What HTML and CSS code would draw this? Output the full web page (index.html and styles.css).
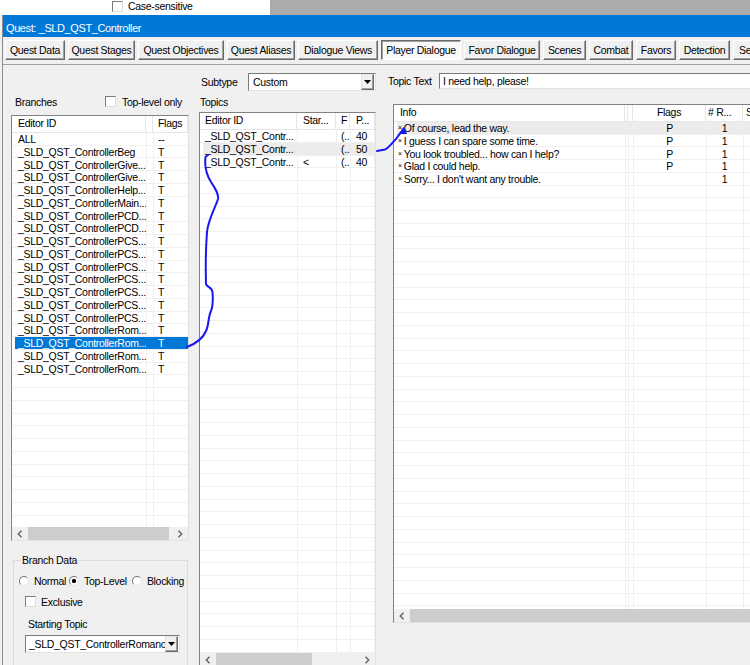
FILE: index.html
```html
<!DOCTYPE html>
<html lang="en">

<head>
    <meta charset="UTF-8">
    <title>Quest: _SLD_QST_Controller</title>
    <link rel="stylesheet" href="styles.css">
</head>

<body>
    <!-- window behind -->
    <div class="behind">
        <span class="cb"></span><span class="behind_text">Case-sensitive</span>
    </div>

    <div class="window">
        <div class="titlebar">Quest: _SLD_QST_Controller</div>

        <div class="tabs">
            <div class="tab">Quest Data</div>
            <div class="tab">Quest Stages</div>
            <div class="tab">Quest Objectives</div>
            <div class="tab">Quest Aliases</div>
            <div class="tab">Dialogue Views</div>
            <div class="tab on">Player Dialogue</div>
            <div class="tab">Favor Dialogue</div>
            <div class="tab">Scenes</div>
            <div class="tab">Combat</div>
            <div class="tab">Favors</div>
            <div class="tab">Detection</div>
            <div class="tab">Se</div>
        </div>

        <div class="panel">
            <!-- branches -->
            <div class="branches">
                <div class="branches_head">
                    <span class="branches_label">Branches</span>
                    <span class="cb"></span>
                    <span>Top-level only</span>
                </div>
                <div class="list branch_list">
                    <div class="lv_head"><span>Editor ID</span><span></span><span>Flags</span></div>
                    <div class="lv_body">
                        <div class="lv_row"><span>ALL</span><span></span><span>--</span></div>
                        <div class="lv_row"><span>_SLD_QST_ControllerBeg</span><span></span><span>T</span></div>
                        <div class="lv_row"><span>_SLD_QST_ControllerGive...</span><span></span><span>T</span></div>
                        <div class="lv_row"><span>_SLD_QST_ControllerGive...</span><span></span><span>T</span></div>
                        <div class="lv_row"><span>_SLD_QST_ControllerHelp...</span><span></span><span>T</span></div>
                        <div class="lv_row"><span>_SLD_QST_ControllerMain...</span><span></span><span>T</span></div>
                        <div class="lv_row"><span>_SLD_QST_ControllerPCD...</span><span></span><span>T</span></div>
                        <div class="lv_row"><span>_SLD_QST_ControllerPCD...</span><span></span><span>T</span></div>
                        <div class="lv_row"><span>_SLD_QST_ControllerPCS...</span><span></span><span>T</span></div>
                        <div class="lv_row"><span>_SLD_QST_ControllerPCS...</span><span></span><span>T</span></div>
                        <div class="lv_row"><span>_SLD_QST_ControllerPCS...</span><span></span><span>T</span></div>
                        <div class="lv_row"><span>_SLD_QST_ControllerPCS...</span><span></span><span>T</span></div>
                        <div class="lv_row"><span>_SLD_QST_ControllerPCS...</span><span></span><span>T</span></div>
                        <div class="lv_row"><span>_SLD_QST_ControllerPCS...</span><span></span><span>T</span></div>
                        <div class="lv_row"><span>_SLD_QST_ControllerPCS...</span><span></span><span>T</span></div>
                        <div class="lv_row"><span>_SLD_QST_ControllerRom...</span><span></span><span>T</span></div>
                        <div class="lv_row sel"><span>_SLD_QST_ControllerRom...</span><span></span><span>T</span></div>
                        <div class="lv_row"><span>_SLD_QST_ControllerRom...</span><span></span><span>T</span></div>
                        <div class="lv_row"><span>_SLD_QST_ControllerRom...</span><span></span><span>T</span></div>
                    </div>
                    <div class="hscroll">
                        <span class="sb_btn"><svg width="6" height="8" viewBox="0 0 6 8"><path d="M4.5 0.8 L1.3 4 L4.5 7.2" fill="none" stroke="#606060" stroke-width="1.4"/></svg></span>
                        <span class="sb_thumb"></span>
                        <span class="sb_track"></span>
                        <span class="sb_btn"><svg width="6" height="8" viewBox="0 0 6 8"><path d="M1.5 0.8 L4.7 4 L1.5 7.2" fill="none" stroke="#606060" stroke-width="1.4"/></svg></span>
                    </div>
                </div>

                <fieldset class="group">
                    <legend>Branch Data</legend>
                    <div class="radio_row">
                        <span class="opt"><span class="rb"></span>Normal</span>
                        <span class="opt opt2"><span class="rb on"></span>Top-Level</span>
                        <span class="opt opt3"><span class="rb"></span>Blocking</span>
                    </div>
                    <div class="check_row"><span class="cb"></span><span>Exclusive</span></div>
                    <div class="start_label">Starting Topic</div>
                    <div class="combo start_combo">
                        <span class="combo_text">_SLD_QST_ControllerRomance</span>
                        <span class="combo_btn"><svg width="7" height="4" viewBox="0 0 7 4"><path d="M0 0 H7 L3.5 4 Z" fill="#000"/></svg></span>
                    </div>
                </fieldset>
            </div>

            <!-- topics -->
            <div class="topics">
                <div class="field_row">
                    <span class="subtype_label">Subtype</span>
                    <div class="combo subtype_combo">
                        <span class="combo_text">Custom</span>
                        <span class="combo_btn"><svg width="7" height="4" viewBox="0 0 7 4"><path d="M0 0 H7 L3.5 4 Z" fill="#000"/></svg></span>
                    </div>
                </div>
                <div class="topics_label">Topics</div>
                <div class="list topic_list">
                    <div class="lv_head"><span>Editor ID</span><span>Star...</span><span>F</span><span>P...</span></div>
                    <div class="lv_body">
                        <div class="lv_row"><span>_SLD_QST_Contr...</span><span></span><span>(..</span><span>40</span></div>
                        <div class="lv_row hot"><span>_SLD_QST_Contr...</span><span></span><span>(..</span><span>50</span></div>
                        <div class="lv_row"><span>_SLD_QST_Contr...</span><span>&lt;</span><span>(..</span><span>40</span></div>
                    </div>
                    <div class="hscroll">
                        <span class="sb_btn"><svg width="6" height="8" viewBox="0 0 6 8"><path d="M4.5 0.8 L1.3 4 L4.5 7.2" fill="none" stroke="#606060" stroke-width="1.4"/></svg></span>
                        <span class="sb_thumb"></span>
                        <span class="sb_track"></span>
                        <span class="sb_btn"><svg width="6" height="8" viewBox="0 0 6 8"><path d="M1.5 0.8 L4.7 4 L1.5 7.2" fill="none" stroke="#606060" stroke-width="1.4"/></svg></span>
                    </div>
                </div>
            </div>

            <!-- infos -->
            <div class="infos">
                <div class="field_row text_row">
                    <span class="topic_text_label">Topic Text</span>
                    <div class="textbox">I need help, please!</div>
                </div>
                <div class="list info_list">
                    <div class="lv_head"><span>Info</span><span></span><span></span><span class="mid">Flags</span><span># R...</span><span>S</span></div>
                    <div class="lv_body">
                        <div class="lv_row hot"><span><i class="mk">×</i>Of course, lead the way.</span><span></span><span></span><span class="mid">P</span><span class="mid">1</span><span></span></div>
                        <div class="lv_row"><span><i class="mk">×</i>I guess I can spare some time.</span><span></span><span></span><span class="mid">P</span><span class="mid">1</span><span></span></div>
                        <div class="lv_row"><span><i class="mk">×</i>You look troubled... how can I help?</span><span></span><span></span><span class="mid">P</span><span class="mid">1</span><span></span></div>
                        <div class="lv_row"><span><i class="mk">×</i>Glad I could help.</span><span></span><span></span><span class="mid">P</span><span class="mid">1</span><span></span></div>
                        <div class="lv_row"><span><i class="mk">×</i>Sorry... I don't want any trouble.</span><span></span><span></span><span class="mid"></span><span class="mid">1</span><span></span></div>
                    </div>
                    <div class="hscroll">
                        <span class="sb_btn"><svg width="6" height="8" viewBox="0 0 6 8"><path d="M4.5 0.8 L1.3 4 L4.5 7.2" fill="none" stroke="#606060" stroke-width="1.4"/></svg></span>
                        <span class="sb_thumb"></span>
                        <span class="sb_track"></span>
                        <span class="sb_btn"><svg width="6" height="8" viewBox="0 0 6 8"><path d="M1.5 0.8 L4.7 4 L1.5 7.2" fill="none" stroke="#606060" stroke-width="1.4"/></svg></span>
                    </div>
                </div>
            </div>
        </div>
    </div>

    <!-- hand drawn marks -->
    <svg class="marks" width="750" height="665" viewBox="0 0 750 665">
        <path d="M208 155 L205.5 157 C204.5 165 206 174 211 182 C215 188 219 194 218 199 C216 206 208 220 207 232 C206 245 205.5 265 206 284 C206.5 287 212 287 212.5 292 C213 298 213 306 211 311 C208 317 209 325 206 331 C203 338 195 344 187 347" fill="none" stroke="#1717f2" stroke-width="2" stroke-linecap="round" stroke-linejoin="round"/>
        <path d="M377 151 L385 149.5 C389 148 392 143 396 139 C398 136 400 133 403 130" fill="none" stroke="#1717f2" stroke-width="2" stroke-linecap="round"/>
        <path d="M400 133.5 L403.5 127.5 L406.5 133.5 Z" fill="#1717f2" stroke="#1717f2" stroke-width="1"/>
    </svg>
</body>

</html>
```

FILE: styles.css
```css
* {
    margin: 0px;
    box-sizing: border-box;
}

body {
    width: 750px;
    height: 665px;
    overflow: hidden;
    position: relative;
    background: #f0f0f0;
    font-family: "Liberation Sans", Arial, sans-serif;
    font-size: 10.5px;
    letter-spacing: -0.3px;
    color: #000;
}

/* window behind */
.behind {
    height: 15px;
    display: flex;
    gap: 5px;
    padding: 1px 0 0 112px;
    background: linear-gradient(to right, #fff 0 270px, #ababab 270px);
}

.behind_text {
    line-height: 11px;
}

.window {
    margin-left: 2px;
    border-left: 1px solid #8d8d8d;
}

.titlebar {
    height: 22px;
    background: #0078d7;
    color: #fff;
    font-size: 11px;
    letter-spacing: -0.4px;
    line-height: 18px;
    padding: 4px 0 0 3px;
}

/* tab buttons */
.tabs {
    display: flex;
    gap: 3px;
    height: 27px;
    padding: 3px 0 0 2px;
    white-space: nowrap;
    overflow: hidden;
}

.tab {
    flex: none;
    height: 20px;
    line-height: 18px;
    text-align: center;
    background: #f0f0f0;
    border: 1px solid;
    border-color: #fff #696969 #696969 #fff;
    box-shadow: inset -1px -1px #a0a0a0;
    overflow: hidden;
}

.tab.on {
    background: #f9f9f9;
    border-color: #696969 #fff #fff #696969;
    box-shadow: inset 1px 1px #a0a0a0;
}

.tab:nth-child(1) { width: 60px; }
.tab:nth-child(2) { width: 67px; }
.tab:nth-child(3) { width: 86px; }
.tab:nth-child(4) { width: 68px; }
.tab:nth-child(5) { width: 80px; }
.tab:nth-child(6) { width: 80px; }
.tab:nth-child(7) { width: 76px; }
.tab:nth-child(8) { width: 43px; }
.tab:nth-child(9) { width: 44px; }
.tab:nth-child(10) { width: 40px; }
.tab:nth-child(11) { width: 51px; }
.tab:nth-child(12) { width: 40px; text-align: left; padding-left: 5px; }

.panel {
    display: flex;
    align-items: flex-start;
    height: 601px;
    border-top: 1px solid #a0a0a0;
    padding-left: 8px;
}

/* common controls */
.cb {
    flex: none;
    width: 11px;
    height: 11px;
    background: #fff;
    border: 1px solid;
    border-color: #7a7a7a #dcdcdc #dcdcdc #7a7a7a;
}

.rb {
    flex: none;
    width: 10px;
    height: 10px;
    border-radius: 50%;
    background: #fff;
    border: 1px solid;
    border-color: #7a7a7a #e3e3e3 #e3e3e3 #7a7a7a;
}

.rb.on {
    background: radial-gradient(circle, #000 0 1.8px, #fff 2.4px);
}

.combo {
    display: flex;
    align-items: center;
    height: 18px;
    background: #fff;
    border: 1px solid;
    border-color: #7a7a7a #e3e3e3 #e3e3e3 #7a7a7a;
}

.combo_text {
    flex: 1;
    padding-left: 3px;
    line-height: 16px;
    white-space: nowrap;
    overflow: hidden;
}

.combo_btn {
    flex: none;
    width: 13px;
    height: 16px;
    margin-right: 1px;
    display: flex;
    align-items: center;
    justify-content: center;
    background: #f0f0f0;
    border: 1px solid;
    border-color: #e3e3e3 #696969 #696969 #e3e3e3;
    box-shadow: inset -1px -1px #a0a0a0;
}

.textbox {
    flex: none;
    width: 320px;
    height: 16px;
    line-height: 14px;
    padding-left: 3px;
    background: #fff;
    border: 1px solid;
    border-color: #7a7a7a #e3e3e3 #e3e3e3 #7a7a7a;
    white-space: nowrap;
}

/* list views */
.list {
    background: #fff;
    border: 1px solid;
    border-color: #828282 #e3e3e3 #e3e3e3 #828282;
    overflow: hidden;
    flex: none;
}

.lv_head {
    display: grid;
    height: 17px;
    line-height: 14px;
    border-bottom: 1px solid #e5e5e5;
    white-space: nowrap;
}

.lv_head span {
    border-right: 1px solid #e5e5e5;
    overflow: hidden;
}

.lv_row {
    display: grid;
    height: 12.75px;
    line-height: 12.75px;
    white-space: nowrap;
}

.lv_row span {
    overflow: hidden;
}

.lv_row.sel {
    background: linear-gradient(#0078d7, #0078d7) 3px 0 / calc(100% - 3px) calc(100% - 1px) no-repeat;
    color: #fff;
}

.lv_row.hot {
    background: linear-gradient(#ececec, #ececec) 3px 0 / calc(100% - 3px) calc(100% - 1px) no-repeat;
}

.hscroll {
    display: flex;
    height: 13px;
    background: #f0f0f0;
}

.sb_btn {
    flex: none;
    width: 16px;
    display: flex;
    align-items: center;
    justify-content: center;
}

.sb_thumb {
    flex: none;
    background: #cdcdcd;
}

.sb_track {
    flex: 1;
}

/* branches column */
.branches {
    flex: none;
    width: 178px;
    margin-top: 30px;
}

.branches_head {
    display: flex;
    align-items: center;
    height: 13px;
    gap: 6px;
    padding-left: 4px;
}

.branches_label {
    width: 84px;
}

.branch_list {
    margin-top: 7px;
    height: 426px;
}

.branch_list .lv_head,
.branch_list .lv_row {
    grid-template-columns: 134px 7px 35px;
}

.branch_list .lv_head span:first-child,
.branch_list .lv_row span:first-child {
    padding-left: 6px;
}

.branch_list .lv_head span:last-child,
.branch_list .lv_row span:last-child {
    padding-left: 5px;
}

.branch_list .lv_body {
    height: 394px;
    background:
        linear-gradient(#f0f0f0, #f0f0f0) 134px 0 / 1px 100% no-repeat,
        linear-gradient(#f0f0f0, #f0f0f0) 141px 0 / 1px 100% no-repeat,
        repeating-linear-gradient(to bottom, #fff 0 11.75px, #f0f0f0 11.75px 12.75px);
}

.branch_list .sb_thumb {
    width: 141px;
}

.group {
    width: 175px;
    margin: 13px 0 0 2px;
    padding: 0 0 30px 0;
    border: 1px solid #dcdcdc;
    min-width: 0;
}

.group legend {
    margin-left: 7px;
    padding: 0 1px;
    line-height: 12px;
}

.radio_row {
    display: flex;
    align-items: center;
    height: 12px;
    margin-top: 9px;
    padding-left: 5px;
    white-space: nowrap;
}

.opt {
    display: flex;
    align-items: center;
    gap: 5px;
}

.opt2 {
    margin-left: 3px;
}

.opt3 {
    margin-left: 5px;
}

.check_row {
    display: flex;
    align-items: center;
    gap: 5px;
    height: 11px;
    margin-top: 9px;
    padding-left: 11px;
}

.start_label {
    height: 12px;
    line-height: 12px;
    margin-top: 11px;
    padding-left: 14px;
}

.start_combo {
    width: 155px;
    margin: 5px 0 0 11px;
}

/* topics column */
.topics {
    flex: none;
    width: 177px;
    margin: 8px 0 0 10px;
}

.field_row {
    display: flex;
    align-items: center;
    height: 18px;
}

.subtype_label {
    width: 49px;
    padding-left: 2px;
}

.subtype_combo {
    width: 128px;
}

.subtype_combo .combo_text {
    padding-left: 4px;
}

.topics_label {
    height: 13px;
    line-height: 13px;
    margin-top: 5px;
    padding-left: 1px;
}

.topic_list {
    margin-top: 3px;
    height: 555px;
}

.topic_list .lv_head,
.topic_list .lv_row {
    grid-template-columns: 97px 39px 14px 25px;
}

.topic_list .lv_head span:nth-child(1),
.topic_list .lv_row span:nth-child(1) {
    padding-left: 5px;
}

.topic_list .lv_head span:nth-child(2),
.topic_list .lv_row span:nth-child(2) {
    padding-left: 6px;
}

.topic_list .lv_head span:nth-child(3),
.topic_list .lv_row span:nth-child(3) {
    padding-left: 5px;
}

.topic_list .lv_head span:nth-child(4),
.topic_list .lv_row span:nth-child(4) {
    padding-left: 6px;
}

.topic_list .lv_body {
    height: 523px;
    background:
        linear-gradient(#f0f0f0, #f0f0f0) 97px 0 / 1px 100% no-repeat,
        linear-gradient(#f0f0f0, #f0f0f0) 136px 0 / 1px 100% no-repeat,
        linear-gradient(#f0f0f0, #f0f0f0) 150px 0 / 1px 100% no-repeat,
        linear-gradient(#f0f0f0, #f0f0f0) 174px 0 / 1px 100% no-repeat,
        repeating-linear-gradient(to bottom, #fff 0 11.75px, #f0f0f0 11.75px 12.75px);
}

.topic_list .sb_thumb {
    width: 96px;
}

/* infos column */
.infos {
    flex: none;
    width: 400px;
    margin: 8px 0 0 12px;
}

.text_row {
    height: 16px;
}

.topic_text_label {
    width: 51px;
}

.info_list {
    width: 400px;
    height: 519px;
    margin: 15px 0 0 5px;
}

.info_list .lv_head,
.info_list .lv_row {
    grid-template-columns: 231px 3px 5px 73px 37px 49px;
}

.info_list .lv_head span:nth-child(1) {
    padding-left: 6px;
}

.info_list .lv_head span:nth-child(5) {
    padding-left: 2px;
}

.info_list .lv_head span:nth-child(6) {
    padding-left: 3px;
}

.info_list .lv_row span:nth-child(1) {
    padding-left: 4px;
}

.info_list .mid {
    text-align: center;
}

.mk {
    font-style: normal;
    font-size: 7px;
    vertical-align: 2px;
    margin-right: 2px;
}

.info_list .lv_body {
    height: 487px;
    background:
        linear-gradient(#f0f0f0, #f0f0f0) 231px 0 / 1px 100% no-repeat,
        linear-gradient(#f0f0f0, #f0f0f0) 234px 0 / 1px 100% no-repeat,
        linear-gradient(#f0f0f0, #f0f0f0) 239px 0 / 1px 100% no-repeat,
        linear-gradient(#f0f0f0, #f0f0f0) 312px 0 / 1px 100% no-repeat,
        linear-gradient(#f0f0f0, #f0f0f0) 349px 0 / 1px 100% no-repeat,
        repeating-linear-gradient(to bottom, #fff 0 11.75px, #f0f0f0 11.75px 12.75px);
}

.info_list .sb_thumb {
    width: 360px;
}

/* blue pen marks drawn over the window */
.marks {
    position: absolute;
    left: 0;
    top: 0;
    pointer-events: none;
}
```
